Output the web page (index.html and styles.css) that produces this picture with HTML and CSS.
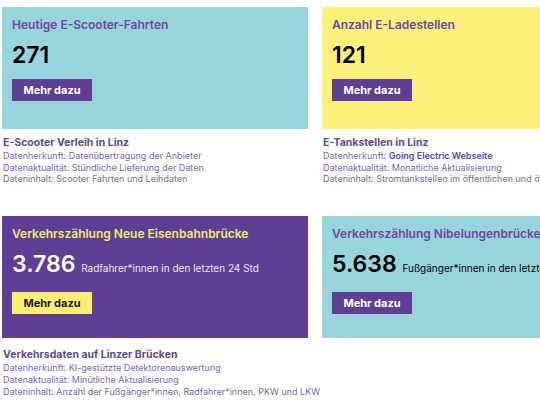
FILE: index.html
```html
<!DOCTYPE html>
<html lang="de">
<head>
  <meta charset="UTF-8" />
  <meta name="viewport" content="width=device-width, initial-scale=1.0"/>
  <title>Linz Dashboard</title>
  <link rel="stylesheet" href="styles.css">
</head>
<body>

<div class="tiles">

  <div class="tile">
    <div class="card teal">
      <h3>Heutige E-Scooter-Fahrten</h3>
      <p class="value">271</p>
      <a class="more" href="#">Mehr dazu</a>
    </div>
    <div class="info">
      <h4>E-Scooter Verleih in Linz</h4>
      <p>Datenherkunft: Datenübertragung der Anbieter</p>
      <p>Datenaktualität: Stündliche Lieferung der Daten</p>
      <p>Dateninhalt: Scooter Fahrten und Leihdaten</p>
    </div>
  </div>

  <div class="tile">
    <div class="card yellow">
      <h3>Anzahl E-Ladestellen</h3>
      <p class="value">121</p>
      <a class="more" href="#">Mehr dazu</a>
    </div>
    <div class="info">
      <h4>E-Tankstellen in Linz</h4>
      <p>Datenherkunft: <a href="#">Going Electric Webseite</a></p>
      <p>Datenaktualität: Monatliche Aktualisierung</p>
      <p>Dateninhalt: Stromtankstellen im öffentlichen und öffentlich zugänglichen Raum</p>
    </div>
  </div>

  <div class="tile">
    <div class="card purple">
      <h3>Verkehrszählung Neue Eisenbahnbrücke</h3>
      <p class="value">3.786 <span class="unit">Radfahrer*innen in den letzten 24 Std</span></p>
      <a class="more" href="#">Mehr dazu</a>
    </div>
    <div class="info low">
      <h4>Verkehrsdaten auf Linzer Brücken</h4>
      <p>Datenherkunft: KI-gestützte Detektorenauswertung</p>
      <p>Datenaktualität: Minütliche Aktualisierung</p>
      <p>Dateninhalt: Anzahl der Fußgänger*innen, Radfahrer*innen, PKW und LKW</p>
    </div>
  </div>

  <div class="tile">
    <div class="card teal">
      <h3>Verkehrszählung Nibelungenbrücke</h3>
      <p class="value">5.638 <span class="unit">Fußgänger*innen in den letzten 24 Std</span></p>
      <a class="more" href="#">Mehr dazu</a>
    </div>
  </div>

</div>

</body>
</html>
```

FILE: styles.css
```css
html, body {
  overflow: hidden;
}

body {
  font-family: Inter, 'Liberation Sans', sans-serif;
  margin: 0;
  padding: 7px 0 0 2px;
  background: #ffffff;
}

.tiles {
  display: grid;
  grid-template-columns: 306px 306px;
  column-gap: 14px;
  row-gap: 31px;
  width: 626px;
}

.card {
  height: 122px;
  box-sizing: border-box;
  padding: 10px 10px 0;
}

.card h3 {
  margin: 0;
  font-size: 12px;
  line-height: 16px;
  font-weight: 600;
  white-space: nowrap;
}

.value {
  margin: 7px 0 0;
  font-size: 23px;
  line-height: 30px;
  font-weight: 600;
  white-space: nowrap;
}

.unit {
  font-size: 10px;
  font-weight: 400;
}

.more {
  display: inline-block;
  margin-top: 9px;
  width: 80px;
  height: 22px;
  line-height: 22px;
  text-align: center;
  font-size: 11px;
  font-weight: 700;
  text-decoration: none;
}

.teal {
  background-color: #97d4dc;
}

.yellow {
  background-color: #fdf07b;
}

.teal h3, .yellow h3 {
  color: #6a48a0;
}

.teal .value, .yellow .value {
  color: #000000;
}

.teal .more, .yellow .more {
  background-color: #5f3f95;
  color: #ffffff;
}

.purple {
  background-color: #5f3f95;
}

.purple h3 {
  color: #f5e96b;
}

.purple .value {
  color: #ffffff;
}

.purple .unit {
  color: #ece6f5;
}

.purple .more {
  background-color: #fbee72;
  color: #1c1630;
}

.info {
  padding: 7px 1px 0;
  white-space: nowrap;
}

.info.low {
  padding-top: 10px;
}

.info h4 {
  margin: 0 0 1px;
  font-size: 10.5px;
  line-height: 13px;
  font-weight: 700;
  color: #5e4a92;
}

.info p {
  margin: 0;
  font-size: 9px;
  line-height: 11.7px;
  color: #7a66ae;
}

.info a {
  color: #3d4ee6;
  font-weight: 600;
  text-decoration: none;
}
```
